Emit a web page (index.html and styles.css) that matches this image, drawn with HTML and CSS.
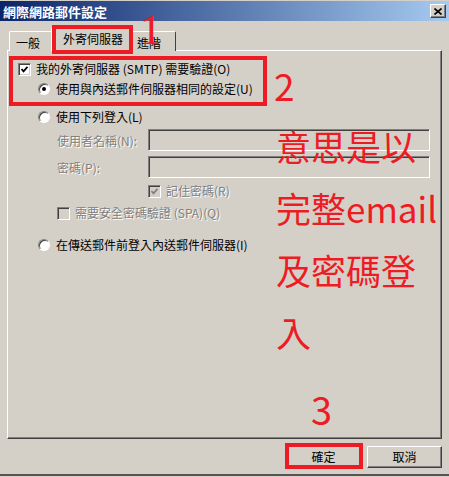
FILE: index.html
```html
<!DOCTYPE html>
<html lang="zh-Hant">
<head>
    <meta charset="UTF-8">
    <title>網際網路郵件設定</title>
    <link rel="stylesheet" href="styles.css">
</head>
<body>
    <div class="window">
        <div class="titlebar">
            <span class="title">網際網路郵件設定</span>
            <span class="close">
                <svg width="8" height="7" viewBox="0 0 8 7"><path d="M0.5 0.5 L7.5 6.5 M7.5 0.5 L0.5 6.5" stroke="#000" stroke-width="1.6"/></svg>
            </span>
        </div>

        <div class="tabs">
            <div class="tab tab-general">一般</div>
            <div class="tab tab-active">外寄伺服器</div>
            <div class="tab tab-advanced">進階</div>
        </div>

        <div class="panel">
            <div class="row row-smtp">
                <span class="check"><svg width="9" height="9" viewBox="0 0 9 9"><polyline points="1.5,4 3.5,6.3 7.5,1.8" fill="none" stroke="#000" stroke-width="1.8"/></svg></span>
                <span>我的外寄伺服器 (SMTP) 需要驗證(O)</span>
            </div>
            <div class="row row-radio row-same">
                <span class="radio radio-on"></span>
                <span>使用與內送郵件伺服器相同的設定(U)</span>
            </div>
            <div class="row row-radio row-login">
                <span class="radio"></span>
                <span>使用下列登入(L)</span>
            </div>
            <div class="field field-user">
                <span class="field-label disabled">使用者名稱(N):</span>
                <span class="textbox"></span>
            </div>
            <div class="field field-pass">
                <span class="field-label disabled">密碼(P):</span>
                <span class="textbox"></span>
            </div>
            <div class="row row-remember">
                <span class="check check-off"><svg width="9" height="9" viewBox="0 0 9 9"><polyline points="1.5,4 3.5,6.3 7.5,1.8" fill="none" stroke="#808080" stroke-width="1.8"/></svg></span>
                <span class="disabled">記住密碼(R)</span>
            </div>
            <div class="row row-spa">
                <span class="check check-off"></span>
                <span class="disabled">需要安全密碼驗證 (SPA)(Q)</span>
            </div>
            <div class="row row-radio row-before">
                <span class="radio"></span>
                <span>在傳送郵件前登入內送郵件伺服器(I)</span>
            </div>
        </div>

        <div class="footer">
            <button class="btn">確定</button>
            <button class="btn">取消</button>
        </div>

        <!-- red annotations drawn over the dialog -->
        <div class="mark mark-tab"></div>
        <div class="mark mark-auth"></div>
        <div class="mark mark-ok"></div>
        <div class="num num-1">1</div>
        <div class="num num-2">2</div>
        <div class="num num-3">3</div>
        <div class="note">意思是以<br>完整email<br>及密碼登<br>入</div>
    </div>
</body>
</html>
```

FILE: styles.css
```css
body { margin: 0; background-color: #d4d0c8; }

.window {
    position: relative;
    width: 449px;
    height: 476px;
    box-sizing: border-box;
    background-color: #d4d0c8;
    border-bottom: 2px solid #555;
    font-family: "Noto Sans CJK TC", "Liberation Sans", sans-serif;
    font-size: 12px;
    color: #000;
    overflow: hidden;
}

.titlebar {
    height: 20px;
    margin-top: 1px;
    padding: 0 3px;
    display: flex;
    align-items: center;
    justify-content: space-between;
    background: linear-gradient(to right, #0a246a, #a6caf0);
}
.title { color: #fff; font-weight: bold; font-size: 13px; line-height: 1; }
.close {
    width: 14px;
    height: 12px;
    display: flex;
    align-items: center;
    justify-content: center;
    background-color: #d4d0c8;
    border: 1px solid;
    border-color: #fff #404040 #404040 #fff;
    box-shadow: inset -1px -1px #808080;
}

/* tab strip */
.tabs {
    position: relative;
    z-index: 1;
    height: 30px;
    margin-bottom: -1px;
    padding-left: 9px;
    display: flex;
    align-items: flex-end;
}
.tab {
    box-sizing: border-box;
    height: 20px;
    padding: 3px 0 0 6px;
    line-height: 16px;
    border: 1px solid;
    border-color: #fff #404040 transparent #fff;
    border-bottom: none;
    border-radius: 2px 2px 0 0;
    background-color: #d4d0c8;
}
.tab-general { width: 44px; }
.tab-active {
    position: relative;
    z-index: 2;
    width: 82px;
    height: 23px;
    margin: 0 -2px;
    padding: 2px 0 0 11px;
}
.tab-advanced { width: 45px; padding-left: 5px; }

.panel {
    box-sizing: border-box;
    height: 389px;
    margin: 0 7px;
    padding-top: 10px;
    border: 1px solid;
    border-color: #fff #404040 #404040 #fff;
    box-shadow: inset -1px -1px #808080;
}

.row { display: flex; align-items: center; gap: 5px; height: 16px; line-height: 16px; }
.row-radio { padding-left: 30px; gap: 6px; }
.row-smtp { padding-left: 10px; }
.row-same { margin-top: 4px; }
.row-login { margin-top: 12px; }
.row-remember { margin-top: 5px; padding-left: 140px; }
.row-spa { margin-top: 6px; padding-left: 49px; }
.row-before { margin-top: 16px; }

.field { display: flex; align-items: center; padding-left: 49px; height: 22px; }
.field-user { margin-top: 4px; }
.field-pass { margin-top: 5px; }
.field-label { width: 91px; }
.textbox {
    box-sizing: border-box;
    width: 282px;
    height: 22px;
    border: 1px solid;
    border-color: #808080 #fff #fff #808080;
    box-shadow: inset 1px 1px #404040, inset -1px -1px #d4d0c8;
}

.disabled { color: #808080; text-shadow: 1px 1px 0 #fff; }

.check {
    box-sizing: border-box;
    width: 13px;
    height: 13px;
    flex: none;
    display: flex;
    align-items: center;
    justify-content: center;
    background-color: #fff;
    border: 1px solid;
    border-color: #808080 #fff #fff #808080;
    box-shadow: inset 1px 1px #404040, inset -1px -1px #d4d0c8;
}
.check-off { background-color: #d4d0c8; }

.radio {
    box-sizing: border-box;
    width: 12px;
    height: 12px;
    flex: none;
    display: flex;
    align-items: center;
    justify-content: center;
    border-radius: 50%;
    background-color: #fff;
    border: 1px solid;
    border-color: #808080 #fff #fff #808080;
    box-shadow: inset 1px 1px #404040;
}
.radio-on::after {
    content: "";
    width: 4px;
    height: 4px;
    border-radius: 50%;
    background-color: #000;
}

.footer { display: flex; justify-content: flex-end; gap: 6px; padding: 7px 7px 0; }
.btn {
    box-sizing: border-box;
    width: 75px;
    height: 22px;
    padding: 0;
    font-family: inherit;
    font-size: 12px;
    line-height: 18px;
    color: #000;
    background-color: #d4d0c8;
    border: 1px solid;
    border-color: #fff #404040 #404040 #fff;
    box-shadow: inset -1px -1px #808080;
}

/* annotations */
.mark { position: absolute; border: 4px solid #ed1c24; box-sizing: border-box; z-index: 5; }
.mark-tab { left: 52px; top: 25px; width: 81px; height: 29px; }
.mark-auth { left: 9px; top: 56px; width: 258px; height: 50px; }
.mark-ok { left: 285px; top: 443px; width: 78px; height: 26px; }

.num { position: absolute; color: #ed1c24; line-height: 1; z-index: 5; }
.num-1 { left: 140px; top: 8px; font-family: "Liberation Serif", serif; font-size: 43px; }
.num-2 { left: 274px; top: 67px; font-size: 37px; }
.num-3 { left: 311px; top: 390px; font-size: 38px; }

.note {
    position: absolute;
    left: 276px;
    top: 115px;
    color: #ed1c24;
    font-size: 35px;
    line-height: 62px;
    z-index: 5;
}
```
